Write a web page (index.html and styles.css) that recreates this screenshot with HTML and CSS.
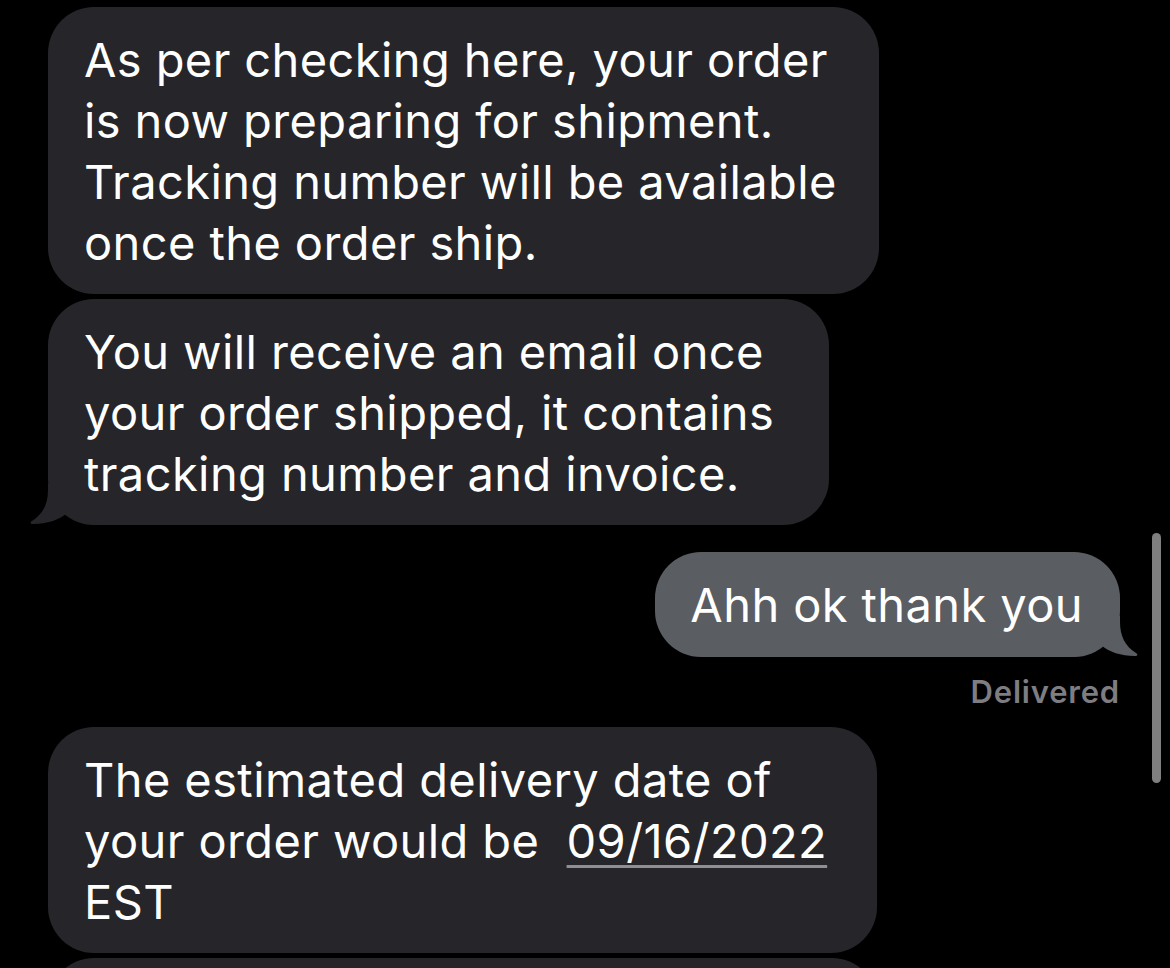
FILE: index.html
```html
<!DOCTYPE html>
<html lang="en">
<head>
    <meta charset="UTF-8">
    <meta name="viewport" content="width=device-width, initial-scale=1.0">
    <title>Messages</title>
    <link rel="stylesheet" href="styles.css">
</head>
<body>
    <main class="thread">
        <div class="bubble received">
            As per checking here, your order<br>
            is now preparing for shipment.<br>
            Tracking number will be available<br>
            once the order ship.
        </div>

        <div class="bubble received has-tail wide-pad">
            You will receive an email once<br>
            your order shipped, it contains<br>
            tracking number and invoice.
            <svg class="tail" viewBox="0 0 72 41" width="72" height="41">
                <path d="M20 0 L72 0 L72 41 C58 41 47 37 39 29 C31 36 19 40 5 40 C2 40 2 38 4 37 C15 30 20 20 20 6 Z"/>
            </svg>
        </div>

        <div class="sent-row">
            <div class="bubble sent has-tail">
                Ahh ok thank you
                <svg class="tail" viewBox="0 0 72 41" width="72" height="41">
                    <path d="M20 0 L72 0 L72 41 C58 41 47 37 39 29 C31 36 19 40 5 40 C2 40 2 38 4 37 C15 30 20 20 20 6 Z"/>
                </svg>
            </div>
        </div>
        <div class="status">Delivered</div>

        <div class="bubble received mid-pad">
            The estimated delivery date of<br>
            your order would be &nbsp;<span class="date-link">09/16/2022</span><br>
            EST
        </div>

        <div class="bubble received next">&nbsp;</div>
    </main>

    <div class="scroll-indicator"></div>
</body>
</html>
```

FILE: styles.css
```css
html, body {
    margin: 0;
    padding: 0;
    height: 100%;
    overflow: hidden;
    background: #000;
}

body {
    font-family: Inter, "Noto Sans", sans-serif;
    color: #fff;
    position: relative;
}

.thread {
    display: flex;
    flex-direction: column;
    align-items: flex-start;
    gap: 5px;
    padding: 7px 50px 0 48px;
}

.bubble {
    position: relative;
    isolation: isolate;
    width: fit-content;
    padding: 22px 42px 21px 36px;
    border-radius: 46px;
    font-size: 47px;
    line-height: 61px;
    letter-spacing: 0.4px;
    white-space: nowrap;
}

.received {
    background-color: #262529;
}

.wide-pad {
    padding-right: 55px;
}

.mid-pad {
    padding-right: 50px;
}

.sent {
    background-color: #5a5d62;
    padding: 22px 37px 22px 35px;
}

/* the tail sits under the text */
.tail {
    position: absolute;
    bottom: 0;
    left: -20px;
    z-index: -1;
    display: block;
}

.received .tail path {
    fill: #262529;
}

.sent .tail {
    left: auto;
    right: -20px;
    transform: scaleX(-1);
}

.sent .tail path {
    fill: #5a5d62;
}

.sent-row {
    align-self: stretch;
    display: flex;
    justify-content: flex-end;
    margin-top: 22px;
}

.status {
    align-self: flex-end;
    font-size: 31px;
    font-weight: 600;
    line-height: 36px;
    letter-spacing: 0.8px;
    color: #7d7d82;
    margin: 12px 0 12px;
}

.date-link {
    text-decoration: underline;
    text-decoration-color: #8e8e93;
    text-decoration-thickness: 3px;
    text-underline-offset: 7px;
}

.next {
    height: 120px;
    width: 830px;
    box-sizing: border-box;
}

.scroll-indicator {
    position: absolute;
    top: 533px;
    right: 9px;
    width: 9px;
    height: 250px;
    border-radius: 5px;
    background-color: #7f7f7f;
}
```
